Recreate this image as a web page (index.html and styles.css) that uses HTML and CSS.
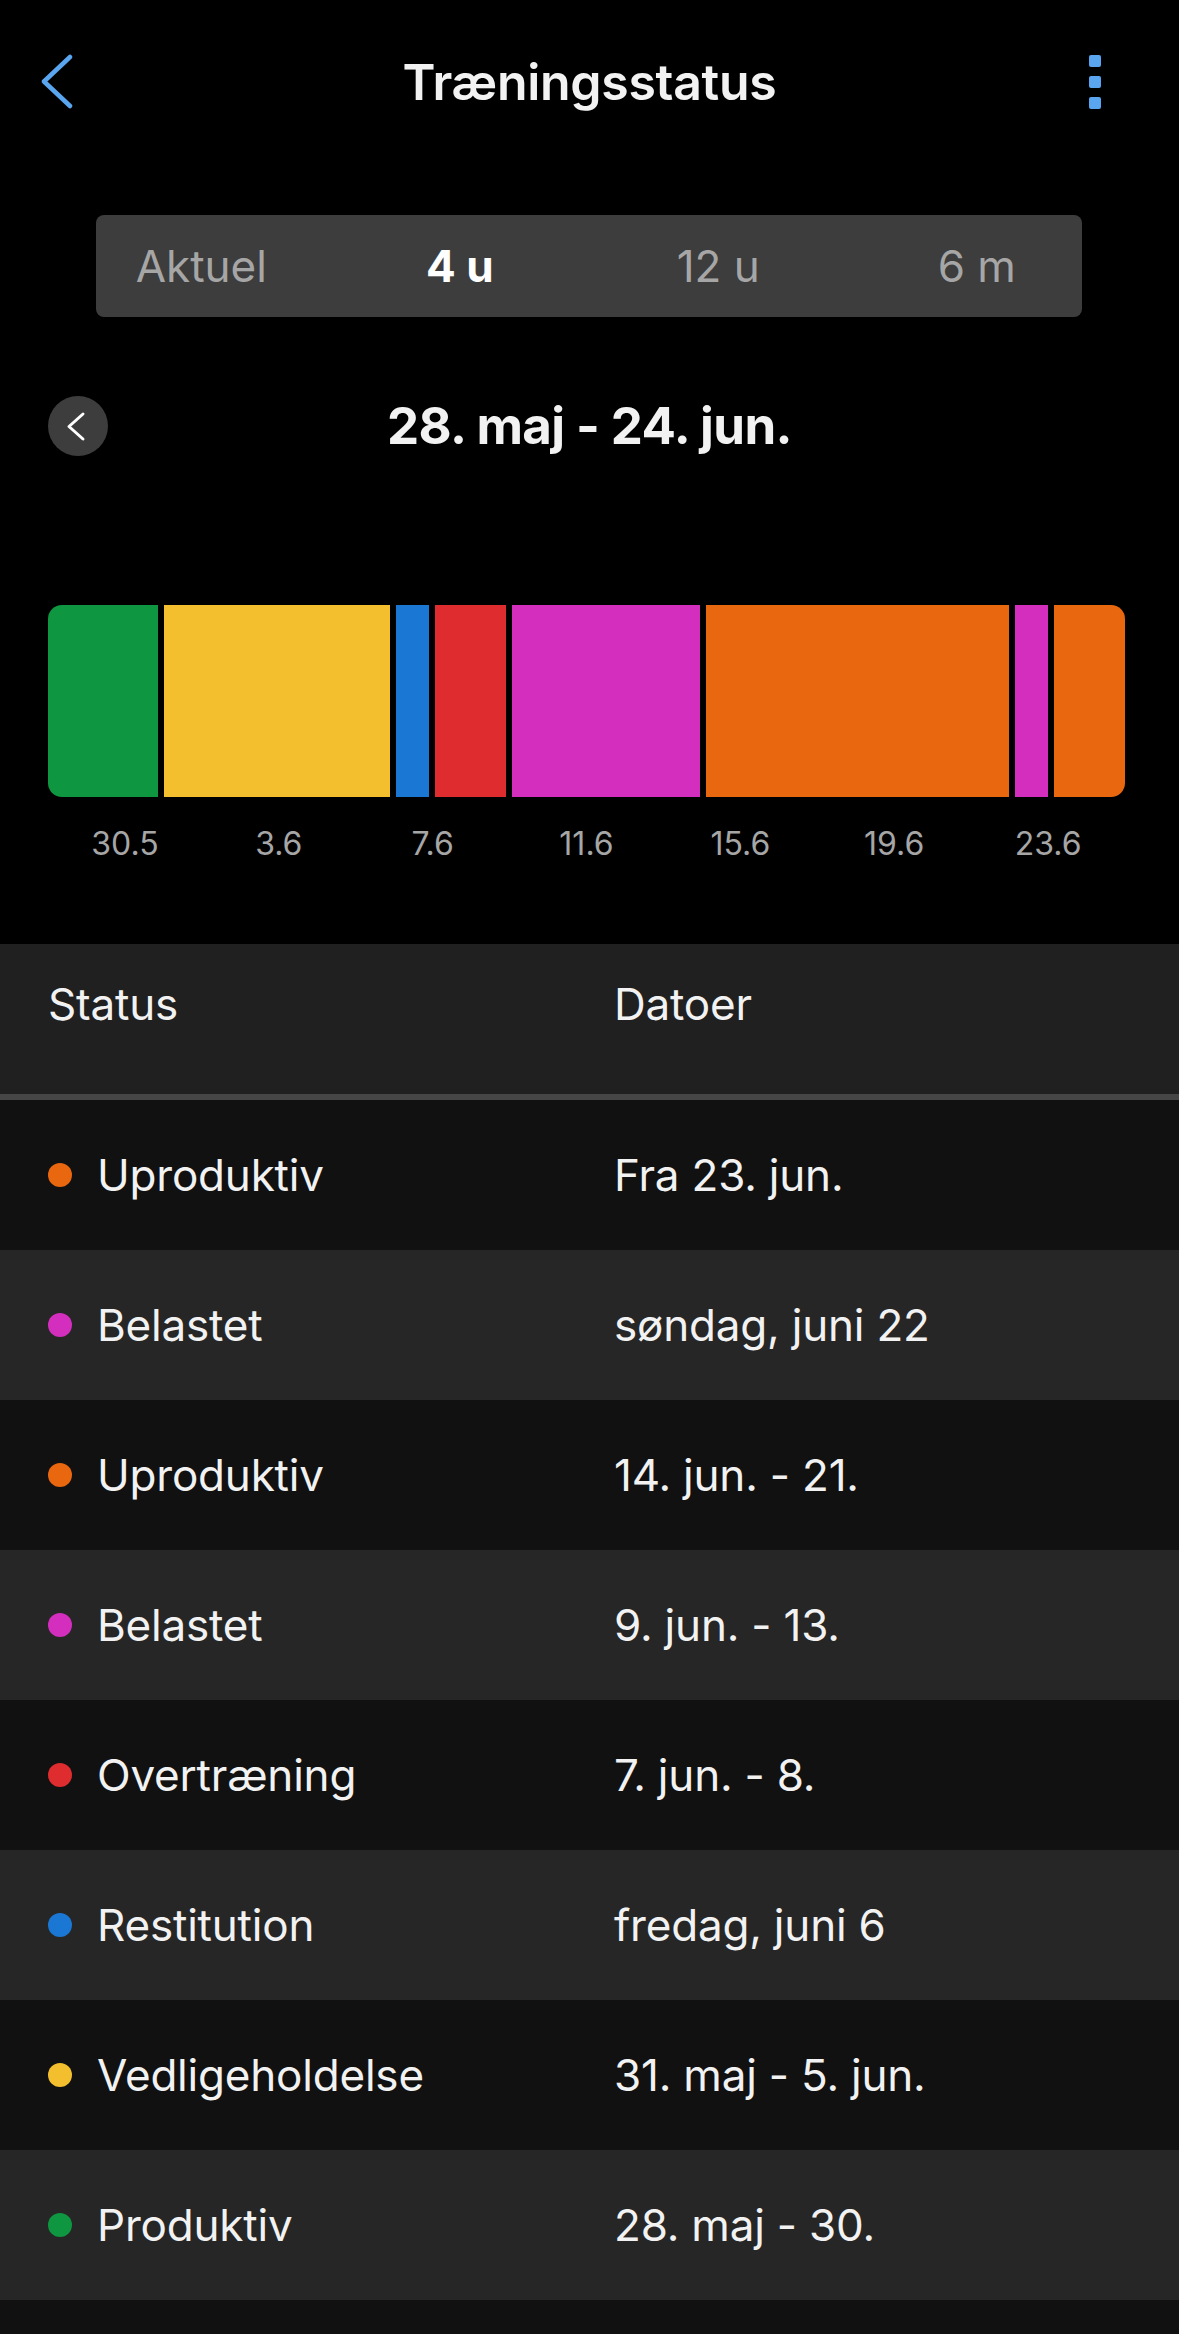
FILE: index.html
```html
<!DOCTYPE html>
<html lang="da">
<head>
<meta charset="UTF-8">
<meta name="viewport" content="width=device-width, initial-scale=1.0">
<title>Træningsstatus</title>
<link rel="stylesheet" href="styles.css">
</head>
<body>
<div class="page">

  <!-- TOPBAR -->
  <div class="nav">
    <div class="nav-back">
      <svg width="34" height="56" viewBox="0 0 34 56"><path d="M30 3 L4 27.5 L30 52" fill="none" stroke="#5aa5f0" stroke-width="4.5" stroke-linecap="round" stroke-linejoin="round"/></svg>
    </div>
    <h1 class="nav-title">Træningsstatus</h1>
    <div class="nav-menu">
      <span class="dot"></span>
      <span class="dot"></span>
      <span class="dot"></span>
    </div>
  </div>

  <!-- PERIODE -->
  <div class="segmented">
    <div class="segments">
      <div class="seg">Aktuel</div>
      <div class="seg active">4 u</div>
      <div class="seg">12 u</div>
      <div class="seg">6 m</div>
    </div>
  </div>

  <div class="range">
    <div class="range-prev">
      <svg width="60" height="60" viewBox="0 0 60 60"><path d="M35 18 L21 30.5 L35 43" fill="none" stroke="#fff" stroke-width="3" stroke-linecap="round" stroke-linejoin="round"/></svg>
    </div>
    <div class="range-label">28. maj - 24. jun.</div>
    <div></div>
  </div>

  <!-- TIDSLINJE -->
  <div class="chart">
    <div class="bar">
      <div class="block produktiv" style="width: 10.771%"></div>
      <div class="block vedlige" style="width: 21.541%"></div>
      <div class="block restitution" style="width: 3.621%"></div>
      <div class="block overtraening" style="width: 7.149%"></div>
      <div class="block belastet" style="width: 18.013%"></div>
      <div class="block uproduktiv" style="width: 28.691%"></div>
      <div class="block belastet" style="width: 3.621%"></div>
      <div class="block uproduktiv" style="width: 6.593%"></div>
    </div>
    <div class="axis">
      <span>30.5</span>
      <span>3.6</span>
      <span>7.6</span>
      <span>11.6</span>
      <span>15.6</span>
      <span>19.6</span>
      <span>23.6</span>
    </div>
  </div>

  <!-- TABEL -->
  <div class="table">
    <div class="table-head">
      <div class="col-status">Status</div>
      <div class="col-date">Datoer</div>
    </div>
    <div class="row">
      <div class="col-status"><span class="bullet uproduktiv"></span>Uproduktiv</div>
      <div class="col-date">Fra 23. jun.</div>
    </div>
    <div class="row">
      <div class="col-status"><span class="bullet belastet"></span>Belastet</div>
      <div class="col-date">søndag, juni 22</div>
    </div>
    <div class="row">
      <div class="col-status"><span class="bullet uproduktiv"></span>Uproduktiv</div>
      <div class="col-date">14. jun. - 21.</div>
    </div>
    <div class="row">
      <div class="col-status"><span class="bullet belastet"></span>Belastet</div>
      <div class="col-date">9. jun. - 13.</div>
    </div>
    <div class="row">
      <div class="col-status"><span class="bullet overtraening"></span>Overtræning</div>
      <div class="col-date">7. jun. - 8.</div>
    </div>
    <div class="row">
      <div class="col-status"><span class="bullet restitution"></span>Restitution</div>
      <div class="col-date">fredag, juni 6</div>
    </div>
    <div class="row">
      <div class="col-status"><span class="bullet vedlige"></span>Vedligeholdelse</div>
      <div class="col-date">31. maj - 5. jun.</div>
    </div>
    <div class="row">
      <div class="col-status"><span class="bullet produktiv"></span>Produktiv</div>
      <div class="col-date">28. maj - 30.</div>
    </div>
    <div class="row"></div>
  </div>

</div>
</body>
</html>
```

FILE: styles.css
```css
:root {
  --bg: #000;
  --text: #f2f2f2;
  --muted: #a6a6a6;
  --blue: #5aa5f0;
  --chip: #3d3d3d;

  --produktiv: #0f9640;
  --vedlige: #f4bf2e;
  --restitution: #1b77d4;
  --overtraening: #de2c2f;
  --belastet: #d42ebf;
  --uproduktiv: #e8670f;
}

* { margin: 0; padding: 0; box-sizing: border-box; }

body {
  background: var(--bg);
  color: var(--text);
  font-family: 'Inter', 'Liberation Sans', sans-serif;
  overflow: hidden;
}

.page { width: 1179px; }

/* === TOPBAR === */
.nav {
  display: grid;
  grid-template-columns: 1fr auto 1fr;
  align-items: center;
  height: 84px;
  margin-top: 40px;
  padding: 0 40px;
}
.nav-back { display: flex; }
.nav-title {
  font-size: 50px;
  font-weight: 600;
  letter-spacing: -0.3px;
  line-height: 84px;
}
.nav-menu {
  justify-self: end;
  display: flex;
  flex-direction: column;
  gap: 9px;
  margin-right: 38px;
}
.nav-menu .dot {
  width: 12px;
  height: 12px;
  border-radius: 2px;
  background: var(--blue);
}

/* === PERIODE === */
.segmented {
  margin: 91px 97px 0 96px;
  height: 102px;
  background: var(--chip);
  border-radius: 8px;
}
.segments {
  display: grid;
  grid-template-columns: repeat(4, 1fr);
  align-items: center;
  height: 100%;
  margin: 0 -24px;
}
.seg {
  text-align: center;
  font-size: 44px;
  color: var(--muted);
  line-height: 54px;
}
.seg.active { color: #fff; font-weight: 700; }

.range {
  display: grid;
  grid-template-columns: 1fr auto 1fr;
  align-items: center;
  margin-top: 78px;
  padding: 0 48px;
  height: 60px;
}
.range-prev {
  width: 60px;
  height: 60px;
  border-radius: 50%;
  background: var(--chip);
}
.range-prev svg { display: block; }
.range-label {
  font-size: 51px;
  font-weight: 700;
  letter-spacing: -0.6px;
}

/* === TIDSLINJE === */
.chart { margin: 150px 54px 0 48px; }
.bar {
  display: flex;
  height: 192px;
  border-radius: 14px;
  overflow: hidden;
}
.block { height: 100%; border-right: 6px solid #000; }
.block:last-child { border-right: 0; }

.produktiv { background: var(--produktiv); }
.vedlige { background: var(--vedlige); }
.restitution { background: var(--restitution); }
.overtraening { background: var(--overtraening); }
.belastet { background: var(--belastet); }
.uproduktiv { background: var(--uproduktiv); }

.axis {
  display: grid;
  grid-template-columns: repeat(7, 1fr);
  margin-top: 27px;
  text-align: center;
  font-size: 32px;
  line-height: 40px;
  color: var(--muted);
}

/* === TABEL === */
.table { margin-top: 80px; }
.table-head {
  display: flex;
  align-items: flex-start;
  height: 156px;
  padding-top: 33px;
  background: #202020;
  border-bottom: 6px solid #464646;
  font-size: 44px;
  line-height: 54px;
}
.row {
  display: flex;
  align-items: center;
  height: 150px;
  font-size: 44px;
  line-height: 54px;
  background: #111;
}
.row:nth-child(odd) { background: #262626; }

.col-status {
  display: flex;
  align-items: center;
  width: 614px;
  padding-left: 48px;
  letter-spacing: -0.2px;
}
.col-date { flex: 1; letter-spacing: -0.2px; }

.bullet {
  width: 24px;
  height: 24px;
  border-radius: 50%;
  margin-right: 25px;
  flex-shrink: 0;
}
```
